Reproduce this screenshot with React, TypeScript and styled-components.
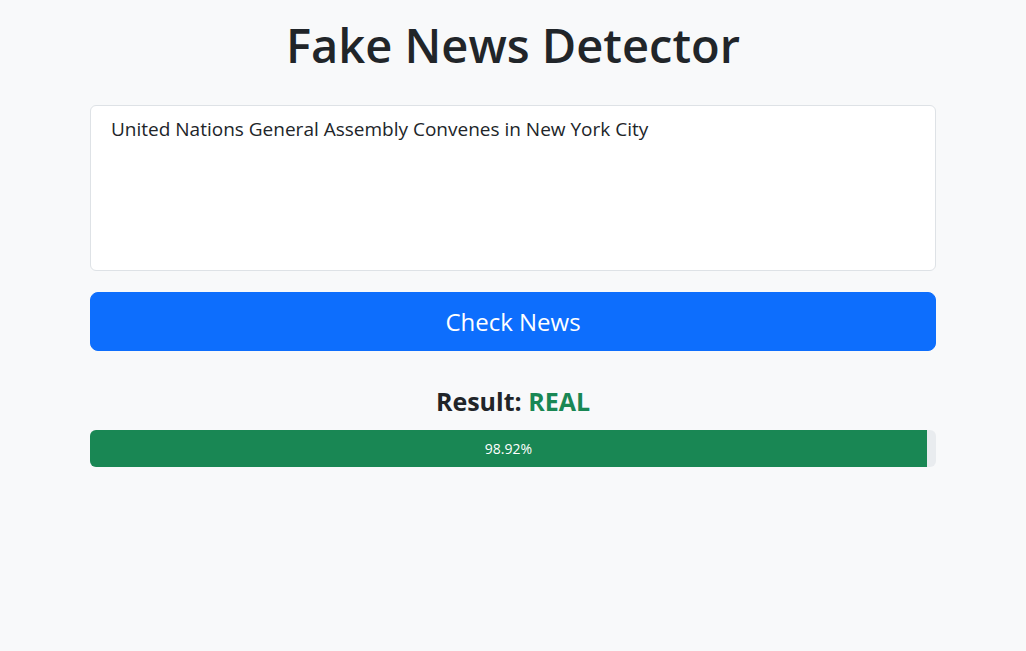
import React from "react";
import styled, { createGlobalStyle } from "styled-components";

const Global = createGlobalStyle`
  html, body { margin: 0; padding: 0; background: #f8f9fa; }
  body {
    font-family: "Open Sans", "Noto Sans", "Liberation Sans", sans-serif;
    color: #212529;
  }
`;

const Page = styled.main`
  width: 846px;
  margin: 0 auto;
  padding-top: 17px;
  display: flex;
  flex-direction: column;
`;

const Title = styled.h1`
  margin: 0 0 32px;
  font-size: 47px;
  line-height: 1.2;
  font-weight: 600;
  text-align: center;
  color: #212529;
`;

const TextArea = styled.textarea`
  box-sizing: border-box;
  width: 100%;
  height: 166px;
  margin: 0;
  padding: 9px 20px 8px;
  border: 1px solid #dee2e6;
  border-radius: 6px;
  background: #fff;
  font-family: inherit;
  font-size: 19px;
  line-height: 1.5;
  color: #212529;
  resize: none;
  outline: none;
`;

const Button = styled.button`
  box-sizing: border-box;
  margin-top: 21px;
  width: 100%;
  height: 59px;
  padding: 1px 0 0;
  border: 1px solid #0d6efd;
  border-radius: 8px;
  background: #0d6efd;
  color: #fff;
  font-family: inherit;
  font-size: 24px;
  line-height: 1.5;
  cursor: pointer;
`;

const ResultLine = styled.h3`
  margin: 35px 0 0;
  font-size: 25px;
  line-height: 1.2;
  font-weight: 700;
  text-align: center;
`;

const Verdict = styled.span<{ $real: boolean }>`
  color: ${(p) => (p.$real ? "#198754" : "#dc3545")};
`;

const Progress = styled.div`
  margin-top: 14px;
  height: 37px;
  border-radius: 6px;
  background: #e9ecef;
  overflow: hidden;
  display: flex;
`;

const Bar = styled.div<{ $real: boolean }>`
  height: 100%;
  background: ${(p) => (p.$real ? "#198754" : "#dc3545")};
  color: #fff;
  font-size: 14px;
  display: flex;
  align-items: center;
  justify-content: center;
  white-space: nowrap;
`;

export default function App() {
  const confidence = 98.92;
  const real = true;
  return (
    <>
      <Global />
      <Page>
        <Title>Fake News Detector</Title>
        <TextArea defaultValue="United Nations General Assembly Convenes in New York City" />
        <Button>Check News</Button>
        <ResultLine>
          Result: <Verdict $real={real}>REAL</Verdict>
        </ResultLine>
        <Progress>
          <Bar $real={real} style={{ width: `${confidence}%` }}>
            {confidence.toFixed(2)}%
          </Bar>
        </Progress>
      </Page>
    </>
  );
}
